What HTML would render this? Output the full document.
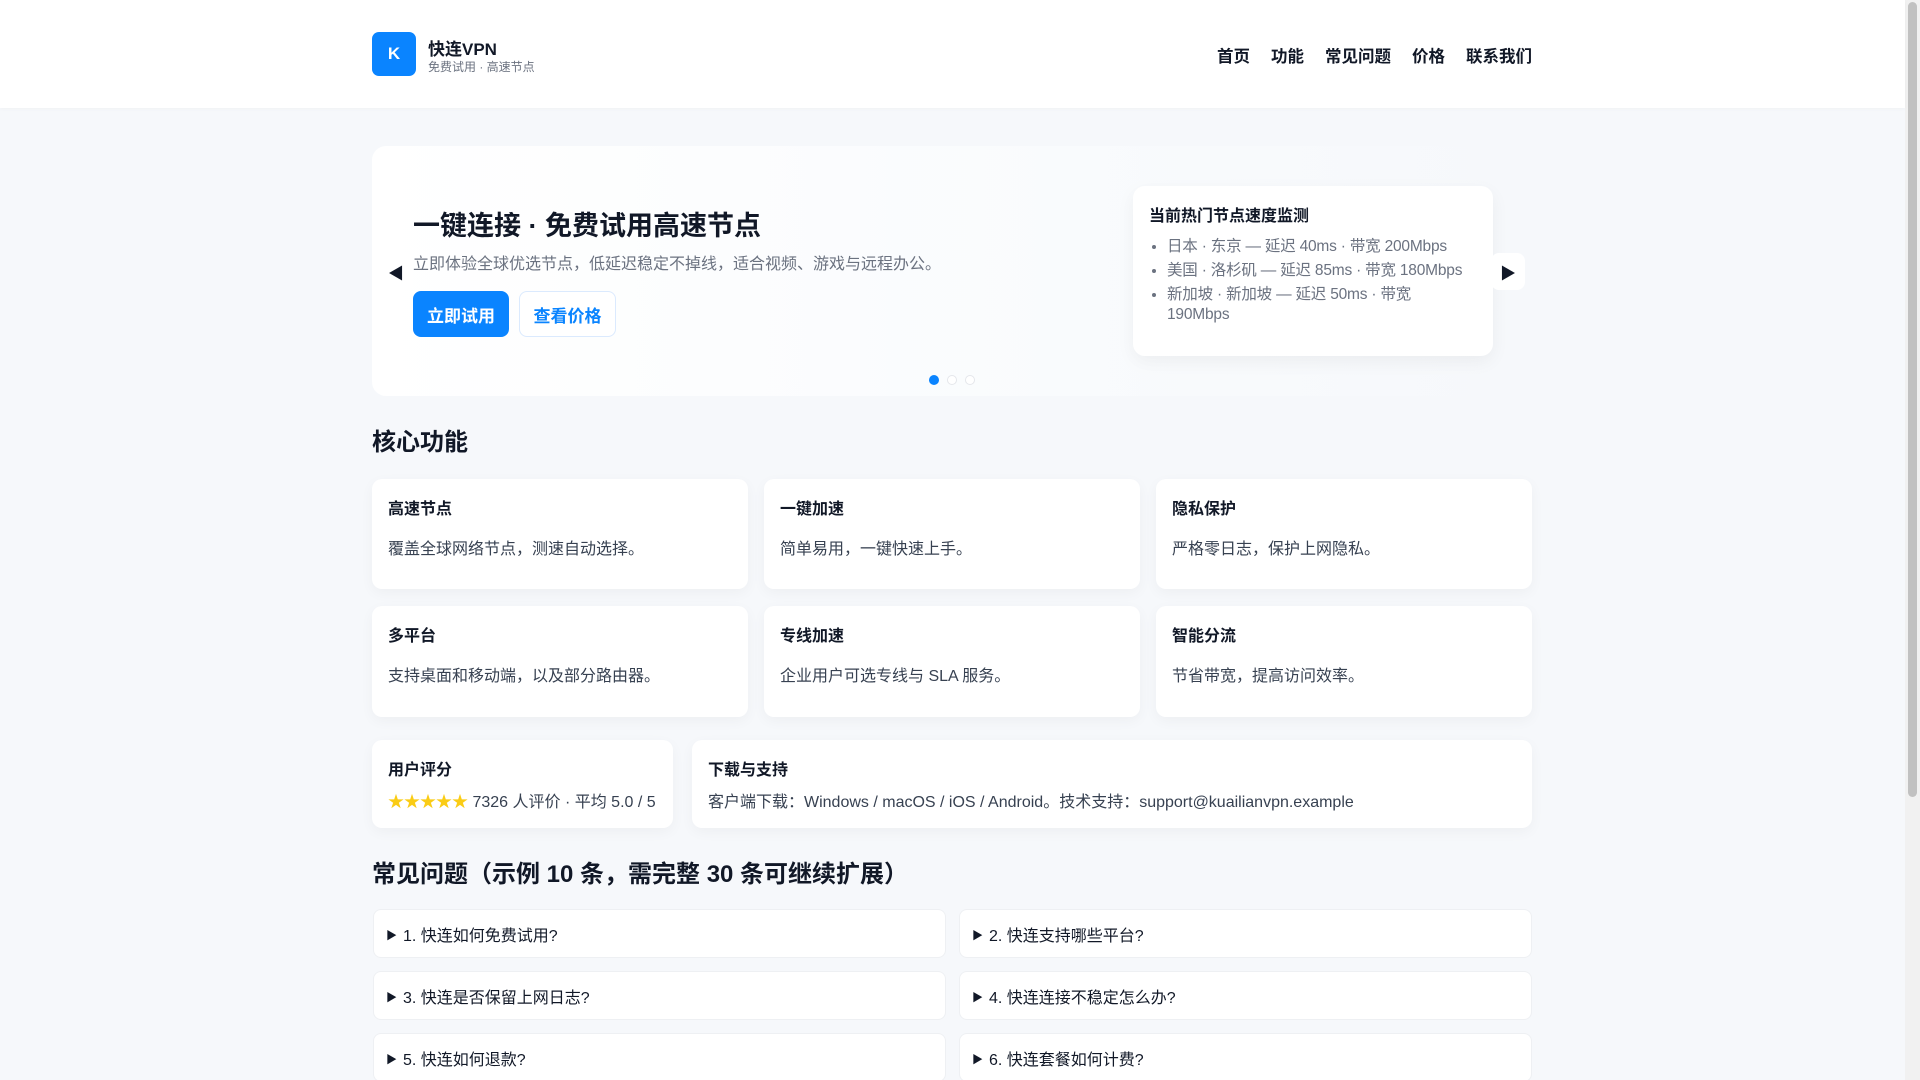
<!DOCTYPE html>
<html><head><meta charset="utf-8">
<style>
*{box-sizing:border-box;margin:0;padding:0}
html,body{width:1920px;height:1080px;overflow:hidden}
body{background:#f6f8fb;font-family:"Liberation Sans","Noto Sans CJK SC",sans-serif;color:#111827;position:relative}
.sb{position:absolute;right:0;top:0;width:15px;height:1080px;background:#f1f1f1}
.sb i{position:absolute;left:3px;top:2px;width:9px;height:795px;background:#c1c1c1;border-radius:5px}
header{position:absolute;left:0;top:0;width:1905px;height:108px;background:#fff;box-shadow:0 1px 4px rgba(0,0,0,.03)}
.logo{position:absolute;left:372px;top:32px;width:44px;height:44px;border-radius:7px;background:#0a84ff;color:#fff;font-weight:bold;font-size:17px;display:flex;align-items:center;justify-content:center}
.bt{position:absolute;left:428px;top:35px;font-size:17px;font-weight:bold}
.bs{position:absolute;left:428px;top:58px;font-size:12px;color:#6b7280}
nav{position:absolute;right:373px;top:43px;display:flex;gap:21px;font-size:16.5px;font-weight:bold}
.hero{position:absolute;left:372px;top:146px;width:1160px;height:250px;border-radius:14px;background:linear-gradient(90deg,#fff 0%,#f9fbfd 60%,#f6f8fb 100%)}
.h1{position:absolute;left:41px;top:58px;font-size:27px;font-weight:bold}
.hp{position:absolute;left:41px;top:104px;font-size:16px;color:#6b7280}
.b1{position:absolute;left:41px;top:145px;width:96px;height:46px;border-radius:8px;background:#0a84ff;color:#fff;font-size:17px;font-weight:bold;display:flex;align-items:center;justify-content:center}
.b2{position:absolute;left:147px;top:145px;width:97px;height:46px;border-radius:8px;background:#fff;border:1px solid #dbeafe;color:#0a84ff;font-size:17px;font-weight:bold;display:flex;align-items:center;justify-content:center}
.dots{position:absolute;left:557px;top:229px;display:flex;gap:8px}
.dots i{width:10px;height:10px;border-radius:50%;background:#fff;border:1px solid #e5e7eb}
.dots i:first-child{background:#0a84ff;border-color:#0a84ff}
.side{position:absolute;left:761px;top:40px;width:360px;height:170px;background:#fff;border-radius:12px;box-shadow:0 6px 18px rgba(0,0,0,.05);padding:16px}
.side h3{font-size:16px;font-weight:bold;margin-bottom:11px}
.side ul{padding-left:18px;color:#6b7280;font-size:15.5px;line-height:20px;letter-spacing:-0.2px}
.side li{margin-bottom:4px;white-space:nowrap}
.ar{position:absolute;width:34px;height:37px;background:#fff;border-radius:8px;top:107px;display:flex;align-items:center;justify-content:center;font-size:16px;color:#111827}
h2{position:absolute;left:372px;font-size:24px;font-weight:bold}
.card{position:absolute;background:#fff;border-radius:10px;box-shadow:0 4px 14px rgba(0,0,0,.04);padding:0 16px}
.card b{position:absolute;left:16px;top:16px;font-size:16px}
.card p{position:absolute;left:16px;top:56px;font-size:16px;color:#374151}
.faq{position:absolute;background:#fff;border-radius:8px;border:1px solid #eef0f3;height:49px;padding-left:12px;font-size:16px;color:#111827;display:flex;align-items:center}
.faq s{text-decoration:none;font-size:11px;margin-right:6px;position:relative;top:1px}
</style></head><body>
<div class="sb"><i></i></div>
<header>
<div class="logo">K</div>
<div class="bt">快连VPN</div>
<div class="bs">免费试用 · 高速节点</div>
<nav><span>首页</span><span>功能</span><span>常见问题</span><span>价格</span><span>联系我们</span></nav>
</header>
<div class="hero">
<div class="h1">一键连接 · 免费试用高速节点</div>
<div class="hp">立即体验全球优选节点，低延迟稳定不掉线，适合视频、游戏与远程办公。</div>
<div class="b1">立即试用</div>
<div class="b2">查看价格</div>
<div class="dots"><i></i><i></i><i></i></div>
<div class="side"><h3>当前热门节点速度监测</h3>
<ul><li>日本 · 东京 — 延迟 40ms · 带宽 200Mbps</li><li>美国 · 洛杉矶 — 延迟 85ms · 带宽 180Mbps</li><li>新加坡 · 新加坡 — 延迟 50ms · 带宽<br>190Mbps</li></ul></div>
<div class="ar" style="left:7px">◀</div>
<div class="ar" style="left:1119px">▶</div>
</div>
<h2 style="top:422px">核心功能</h2>
<div class="card" style="left:372px;top:479px;width:376px;height:110px"><b>高速节点</b><p>覆盖全球网络节点，测速自动选择。</p></div>
<div class="card" style="left:764px;top:479px;width:376px;height:110px"><b>一键加速</b><p>简单易用，一键快速上手。</p></div>
<div class="card" style="left:1156px;top:479px;width:376px;height:110px"><b>隐私保护</b><p>严格零日志，保护上网隐私。</p></div>
<div class="card" style="left:372px;top:606px;width:376px;height:111px"><b>多平台</b><p>支持桌面和移动端，以及部分路由器。</p></div>
<div class="card" style="left:764px;top:606px;width:376px;height:111px"><b>专线加速</b><p>企业用户可选专线与 SLA 服务。</p></div>
<div class="card" style="left:1156px;top:606px;width:376px;height:111px"><b>智能分流</b><p>节省带宽，提高访问效率。</p></div>
<div class="card" style="left:372px;top:740px;width:301px;height:88px"><b>用户评分</b><p style="top:48px;color:#374151"><span style="color:#facc15">★★★★★</span> 7326 人评价 · 平均 5.0 / 5</p></div>
<div class="card" style="left:692px;top:740px;width:840px;height:88px"><b>下载与支持</b><p style="top:48px">客户端下载：Windows / macOS / iOS / Android。技术支持：support@kuailianvpn.example</p></div>
<h2 style="top:854px">常见问题（示例 10 条，需完整 30 条可继续扩展）</h2>
<div class="faq" style="left:373px;top:909px;width:573px"><s>▶</s>1. 快连如何免费试用?</div>
<div class="faq" style="left:959px;top:909px;width:573px"><s>▶</s>2. 快连支持哪些平台?</div>
<div class="faq" style="left:373px;top:971px;width:573px"><s>▶</s>3. 快连是否保留上网日志?</div>
<div class="faq" style="left:959px;top:971px;width:573px"><s>▶</s>4. 快连连接不稳定怎么办?</div>
<div class="faq" style="left:373px;top:1033px;width:573px"><s>▶</s>5. 快连如何退款?</div>
<div class="faq" style="left:959px;top:1033px;width:573px"><s>▶</s>6. 快连套餐如何计费?</div>
</body></html>
